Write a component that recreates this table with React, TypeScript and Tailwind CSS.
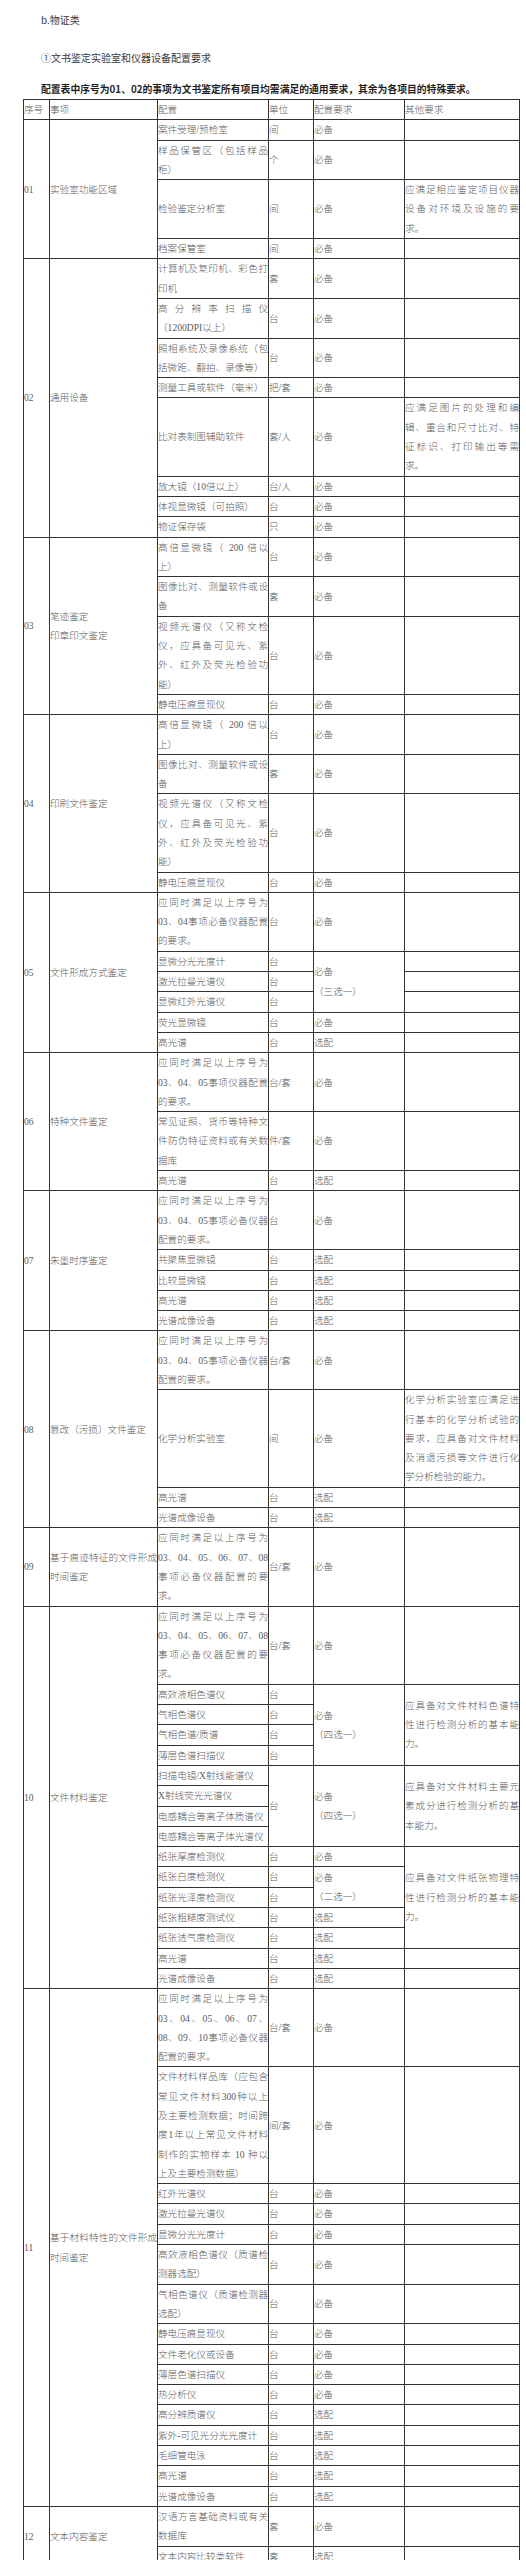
type Cell = string | [string, number];

const COLS = ['w-[26px]', 'w-[108px]', 'w-[111px]', 'w-[45px]', 'w-[91px]', 'w-[115px]'];

const HEAD = ['序号', '事项', '配置', '单位', '配置要求', '其他要求'];

const MICRO = '高倍显微镜（ 200 倍以上）';
const PREV_0304 = '应同时满足以上序号为03、04事项必备仪器配置的要求。';
const PREV_050607 = '应同时满足以上序号为03、04、05事项必备仪器配置的要求。';
const PREV_TO08 = '应同时满足以上序号为03、04、05、06、07、08事项必备仪器配置的要求。';

const ROWS: Cell[][] = [
  // 01
  [['01', 4], ['实验室功能区域', 4], '案件受理/预检室', '间', '必备', ''],
  ['样品保管区（包括样品柜）', '个', '必备', ''],
  ['检验鉴定分析室', '间', '必备', '应满足相应鉴定项目仪器设备对环境及设施的要求。'],
  ['档案保管室', '间', '必备', ''],
  // 02
  [['02', 8], ['通用设备', 8], '计算机及复印机、彩色打印机', '套', '必备', ''],
  ['高分辨率扫描仪（1200DPI以上）', '台', '必备', ''],
  ['照相系统及录像系统（包括微距、翻拍、录像等）', '台', '必备', ''],
  ['测量工具或软件（毫米）', '把/套', '必备', ''],
  ['比对表制图辅助软件', '套/人', '必备', '应满足图片的处理和编辑、重合和尺寸比对、特征标识、打印输出等需求。'],
  ['放大镜（10倍以上）', '台/人', '必备', ''],
  ['体视显微镜（可拍照）', '台', '必备', ''],
  ['物证保存袋', '只', '必备', ''],
  // 03
  [['03', 4], ['笔迹鉴定\n印章印文鉴定', 4], MICRO, '台', '必备', ''],
  ['图像比对、测量软件或设备', '套', '必备', ''],
  ['视频光谱仪（又称文检仪，应具备可见光、紫外、红外及荧光检验功能）', '台', '必备', ''],
  ['静电压痕显现仪', '台', '必备', ''],
  // 04
  [['04', 4], ['印刷文件鉴定', 4], MICRO, '台', '必备', ''],
  ['图像比对、测量软件或设备', '套', '必备', ''],
  ['视频光谱仪（又称文检仪，应具备可见光、紫外、红外及荧光检验功能）', '台', '必备', ''],
  ['静电压痕显现仪', '台', '必备', ''],
  // 05
  [['05', 6], ['文件形成方式鉴定', 6], PREV_0304, '台', '必备', ''],
  ['显微分光光度计', '台', ['必备\n（三选一）', 3], ''],
  ['激光拉曼光谱仪', '台', ''],
  ['显微红外光谱仪', '台', ''],
  ['荧光显微镜', '台', '必备', ''],
  ['高光谱', '台', '选配', ''],
  // 06
  [['06', 3], ['特种文件鉴定', 3], '应同时满足以上序号为03、04、05事项仪器配置的要求。', '台/套', '必备', ''],
  ['常见证照、货币等特种文件防伪特征资料或有关数据库', '件/套', '必备', ''],
  ['高光谱', '台', '选配', ''],
  // 07
  [['07', 5], ['朱墨时序鉴定', 5], PREV_050607, '台', '必备', ''],
  ['共聚焦显微镜', '台', '选配', ''],
  ['比较显微镜', '台', '选配', ''],
  ['高光谱', '台', '选配', ''],
  ['光谱成像设备', '台', '选配', ''],
  // 08
  [['08', 4], ['篡改（污损）文件鉴定', 4], PREV_050607, '台/套', '必备', ''],
  ['化学分析实验室', '间', '必备', '化学分析实验室应满足进行基本的化学分析试验的要求，应具备对文件材料及消退污损等文件进行化学分析检验的能力。'],
  ['高光谱', '台', '选配', ''],
  ['光谱成像设备', '台', '选配', ''],
  // 09
  ['09', '基于痕迹特征的文件形成时间鉴定', PREV_TO08, '台/套', '必备', ''],
  // 10
  [['10', 16], ['文件材料鉴定', 16], PREV_TO08, '台/套', '必备', ''],
  ['高效液相色谱仪', '台', ['必备\n（四选一）', 4], ['应具备对文件材料色谱特性进行检测分析的基本能力。', 4]],
  ['气相色谱仪', '台'],
  ['气相色谱/质谱', '台'],
  ['薄层色谱扫描仪', '台'],
  ['扫描电镜/X射线能谱仪', ['台', 4], ['必备\n（四选一）', 4], ['应具备对文件材料主要元素成分进行检测分析的基本能力。', 4]],
  ['X射线荧光光谱仪'],
  ['电感耦合等离子体质谱仪'],
  ['电感耦合等离子体光谱仪'],
  ['纸张厚度检测仪', '台', '必备', ['应具备对文件纸张物理特性进行检测分析的基本能力。', 5]],
  ['纸张白度检测仪', '台', ['必备\n（二选一）', 2]],
  ['纸张光泽度检测仪', '台'],
  ['纸张粗糙度测试仪', '台', '选配'],
  ['纸张透气度检测仪', '台', '选配'],
  ['高光谱', '台', '选配', ''],
  ['光谱成像设备', '台', '选配', ''],
  // 11
  [['11', 16], ['基于材料特性的文件形成时间鉴定', 16], '应同时满足以上序号为03、04、05、06、07、08、09、10事项必备仪器配置的要求。', '台/套', '必备', ''],
  ['文件材料样品库（应包含常见文件材料300种以上及主要检测数据；时间跨度1年以上常见文件材料制作的实物样本 10 种以上及主要检测数据）', '间/套', '必备', ''],
  ['红外光谱仪', '台', '必备', ''],
  ['激光拉曼光谱仪', '台', '必备', ''],
  ['显微分光光度计', '台', '必备', ''],
  ['高效液相色谱仪（质谱检测器选配）', '台', '必备', ''],
  ['气相色谱仪（质谱检测器选配）', '台', '必备', ''],
  ['静电压痕显现仪', '台', '必备', ''],
  ['文件老化仪或设备', '台', '必备', ''],
  ['薄层色谱扫描仪', '台', '必备', ''],
  ['热分析仪', '台', '必备', ''],
  ['高分辨质谱仪', '台', '选配', ''],
  ['紫外-可见光分光光度计', '台', '选配', ''],
  ['毛细管电泳', '台', '选配', ''],
  ['高光谱', '台', '选配', ''],
  ['光谱成像设备', '台', '选配', ''],
  // 12
  [['12', 2], ['文本内容鉴定', 2], '汉语方言基础资料或有关数据库', '套', '必备', ''],
  ['文本内容比较类软件', '套', '选配', ''],
];

const cellCls =
  'border border-[#333] p-0 align-middle text-justify whitespace-pre-line';

export default function App() {
  return (
    <div className="w-[526px] min-h-[2560px] bg-white font-['Noto_Sans_CJK_SC',sans-serif]">
      {/* intro */}
      <div className="pl-[41px] pt-[10px] text-[10px] leading-[20px] text-[#3a3a3a]">
        <p>b.物证类</p>
        <p className="mt-[18px]">①文书鉴定实验室和仪器设备配置要求</p>
        <p className="mt-[11px] text-[9.8px] font-bold text-[#1f1f1f]">
          配置表中序号为01、02的事项为文书鉴定所有项目均需满足的通用要求，其余为各项目的特殊要求。
        </p>
      </div>

      {/* table */}
      <table className="ml-[23px] w-[496px] table-fixed border-collapse font-['Liberation_Serif','Noto_Sans_CJK_SC',serif] text-[9.6px] font-light leading-[19.3px] text-[#5c5c5c]">
        <colgroup>
          {COLS.map((w, i) => (
            <col key={i} className={w} />
          ))}
        </colgroup>
        <tbody>
          <tr>
            {HEAD.map((h) => (
              <td key={h} className={cellCls}>
                {h}
              </td>
            ))}
          </tr>
          {ROWS.map((row, r) => (
            <tr key={r}>
              {row.map((c, i) => {
                const [text, rs] = typeof c === 'string' ? [c, 1] : c;
                return (
                  <td key={i} rowSpan={rs} className={cellCls}>
                    {text}
                  </td>
                );
              })}
            </tr>
          ))}
        </tbody>
      </table>
    </div>
  );
}
